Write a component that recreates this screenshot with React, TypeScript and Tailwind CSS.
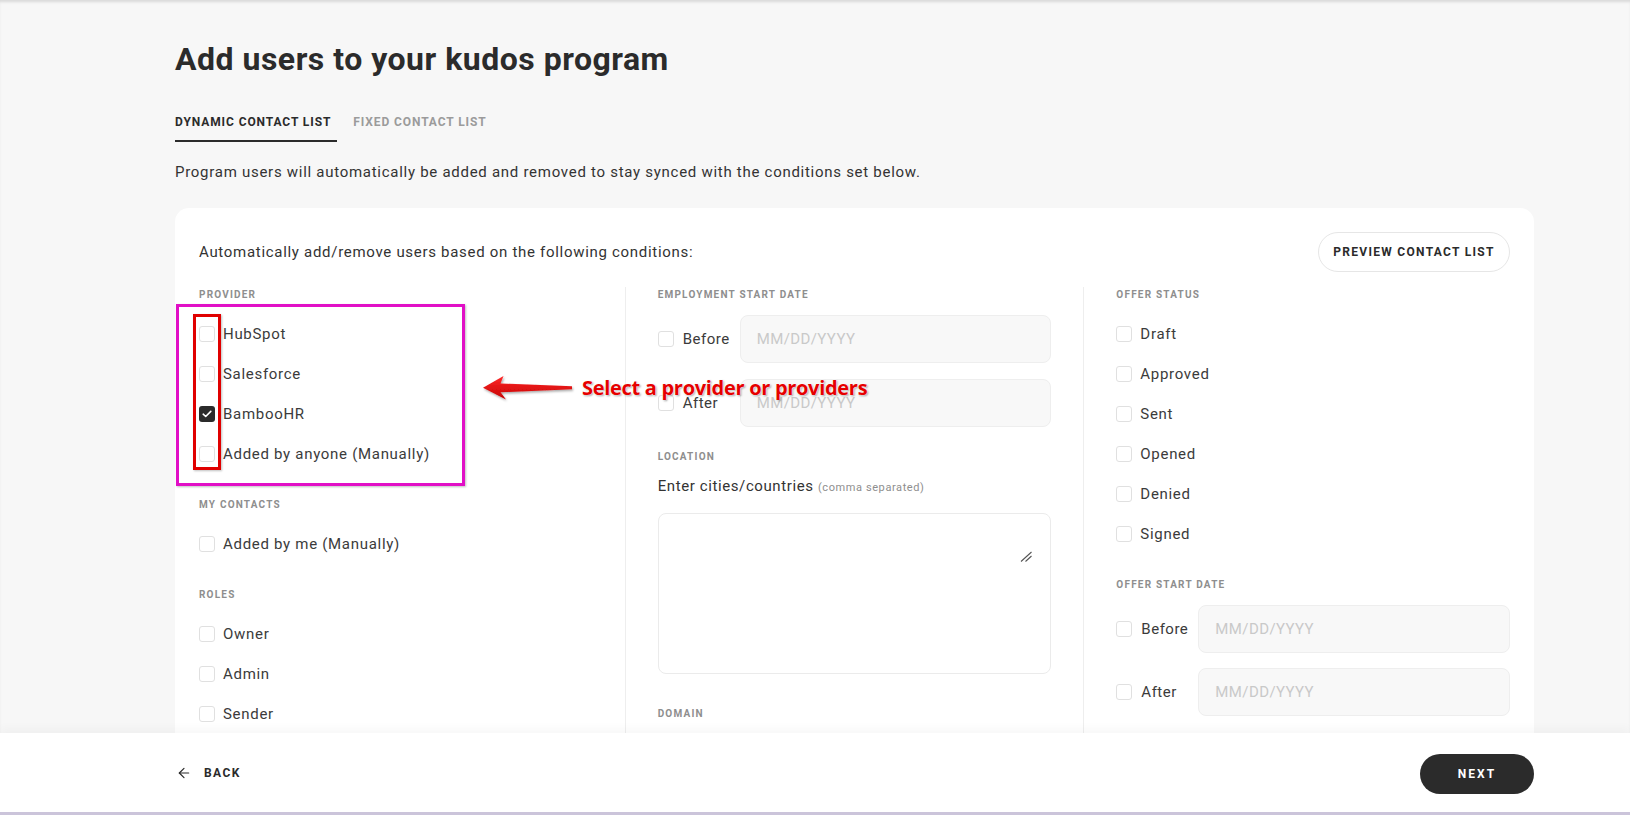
import { ArrowLeft } from "lucide-react";

type Opt = { label: string; checked?: boolean };

const PROVIDERS: Opt[] = [
  { label: "HubSpot" },
  { label: "Salesforce" },
  { label: "BambooHR", checked: true },
  { label: "Added by anyone (Manually)" },
];

const ROLES: Opt[] = [{ label: "Owner" }, { label: "Admin" }, { label: "Sender" }];

const OFFER_STATUS: Opt[] = [
  { label: "Draft" },
  { label: "Approved" },
  { label: "Sent" },
  { label: "Opened" },
  { label: "Denied" },
  { label: "Signed" },
];

function Box({ checked }: { checked?: boolean }) {
  if (checked) {
    return (
      <span className="flex h-4 w-4 shrink-0 items-center justify-center rounded-[3px] bg-[#2b2b2b]">
        <svg width="10" height="8" viewBox="0 0 10 8" fill="none">
          <path d="M1.2 4.2 3.7 6.5 8.8 1.4" stroke="#fff" strokeWidth="1.6" strokeLinecap="round" strokeLinejoin="round" />
        </svg>
      </span>
    );
  }
  return <span className="h-4 w-4 shrink-0 rounded-[3px] border border-[#e0e0e0] bg-white" />;
}

function CheckRow({ label, checked }: Opt) {
  return (
    <div className="flex h-10 items-center gap-2 text-[15px] tracking-[0.7px] text-[#3b3b3b]">
      <Box checked={checked} />
      <span>{label}</span>
    </div>
  );
}

function SectionLabel({ children }: { children: string }) {
  return <div className="h-4 text-[10px] font-bold leading-4 tracking-[1.2px] text-[#8e8e8e]">{children}</div>;
}

function DateRow({ label }: { label: string }) {
  return (
    <div className="flex h-12 items-center">
      <div className="flex w-[82px] shrink-0 items-center gap-[9px]">
        <Box />
        <span className="text-[15px] tracking-[0.5px] text-[#3b3b3b]">{label}</span>
      </div>
      <div className="flex h-12 flex-1 items-center rounded-lg border border-[#eeeeee] bg-[#f8f8f8] pl-4 text-[15px] tracking-[0.4px] text-[#c9c9c9]">
        MM/DD/YYYY
      </div>
    </div>
  );
}

export default function App() {
  return (
    <div className="relative flex h-[815px] flex-col overflow-hidden bg-[#f7f7f7] font-[Roboto,sans-serif] text-[#2b2b2b]">
      <main className="min-h-0 flex-1 overflow-hidden pl-[175px] pt-[39px] shadow-[inset_0_3px_3px_-1px_rgba(0,0,0,0.12)]">
        <div className="w-[1359px]">
          <h1 className="h-10 text-[32px] font-bold leading-10 tracking-[0.5px]">Add users to your kudos program</h1>

          <div className="mt-[35px] flex gap-4 text-[12px] font-bold leading-4 tracking-[0.9px]">
            <div className="border-b-2 border-[#2b2b2b] pb-[10px] pr-[6px]">DYNAMIC CONTACT LIST</div>
            <div className="pb-[10px] text-[#9b9b9b]">FIXED CONTACT LIST</div>
          </div>

          <p className="mt-[19px] text-[15px] leading-[22px] tracking-[0.72px] text-[#333]">
            Program users will automatically be added and removed to stay synced with the conditions set below.
          </p>

          <section className="mt-[25px] rounded-[14px] bg-white px-6 pt-6">
            <div className="flex h-10 items-center justify-between">
              <span className="text-[15px] tracking-[0.7px] text-[#333]">
                Automatically add/remove users based on the following conditions:
              </span>
              <button className="h-10 w-[192px] rounded-full border border-[#e6e6e6] bg-white text-[12px] font-bold tracking-[1.3px] text-[#2b2b2b]">
                PREVIEW CONTACT LIST
              </button>
            </div>

            <div className="mt-[15px] flex">
              <div className="flex-1 pr-8 pb-6">
                <SectionLabel>PROVIDER</SectionLabel>
                <div className="mt-[11px]">
                  {PROVIDERS.map((o) => (
                    <CheckRow key={o.label} {...o} />
                  ))}
                </div>
                <div className="mt-[23px]">
                  <SectionLabel>MY CONTACTS</SectionLabel>
                </div>
                <div className="mt-[11px]">
                  <CheckRow label="Added by me (Manually)" />
                </div>
                <div className="mt-[23px]">
                  <SectionLabel>ROLES</SectionLabel>
                </div>
                <div className="mt-[11px]">
                  {ROLES.map((o) => (
                    <CheckRow key={o.label} {...o} />
                  ))}
                </div>
              </div>

              <div className="flex-1 border-l border-[#eeeeee] px-8">
                <SectionLabel>EMPLOYMENT START DATE</SectionLabel>
                <div className="mt-3">
                  <DateRow label="Before" />
                </div>
                <div className="mt-4">
                  <DateRow label="After" />
                </div>
                <div className="mt-[22px]">
                  <SectionLabel>LOCATION</SectionLabel>
                </div>
                <div className="mt-[10px] text-[15px] leading-[22px] tracking-[0.6px] text-[#333]">
                  Enter cities/countries{" "}
                  <span className="text-[11px] tracking-[0.6px] text-[#8e8e8e]">(comma separated)</span>
                </div>
                <div className="mt-[14px] flex h-[161px] justify-end rounded-lg border border-[#ebebeb] bg-white pr-[18px] pt-[37px]">
                  <svg width="12" height="11" viewBox="0 0 12 11" fill="none">
                    <path d="M1 10.5 11.5 1M5.5 10.5 11.5 5" stroke="#555" strokeWidth="1.1" />
                  </svg>
                </div>
                <div className="mt-8">
                  <SectionLabel>DOMAIN</SectionLabel>
                </div>
                <div className="mt-3 h-12 rounded-lg border border-[#eeeeee] bg-[#f8f8f8]" />
              </div>

              <div className="flex-1 border-l border-[#eeeeee] pl-8">
                <SectionLabel>OFFER STATUS</SectionLabel>
                <div className="mt-[11px]">
                  {OFFER_STATUS.map((o) => (
                    <CheckRow key={o.label} {...o} />
                  ))}
                </div>
                <div className="mt-[23px]">
                  <SectionLabel>OFFER START DATE</SectionLabel>
                </div>
                <div className="mt-3">
                  <DateRow label="Before" />
                </div>
                <div className="mt-[15px]">
                  <DateRow label="After" />
                </div>
              </div>
            </div>
          </section>
        </div>
      </main>

      <footer className="relative z-10 flex h-[82px] shrink-0 items-center justify-between border-b-[3px] border-[#cbc4da] bg-white pl-[176px] pr-[96px] shadow-[0_-4px_10px_rgba(0,0,0,0.035)]">
        <button className="flex items-center gap-[12px] text-[12px] font-bold tracking-[1.4px] text-[#2b2b2b]">
          <ArrowLeft size={16} strokeWidth={1.8} />
          BACK
        </button>
        <button className="mt-[3px] h-10 w-[114px] rounded-full bg-[#2b2b2b] text-[12px] font-bold tracking-[2px] text-white">
          NEXT
        </button>
      </footer>

      {/* annotation overlays */}
      <div className="pointer-events-none absolute left-[176px] top-[304px] h-[182px] w-[289px] border-[3px] border-[#e10fc6] shadow-[1px_1px_2px_rgba(0,0,0,0.25)]" />
      <div className="pointer-events-none absolute left-[193px] top-[314px] h-[156px] w-[28px] border-[3px] border-[#e00000] shadow-[1px_1px_2px_rgba(0,0,0,0.25)]" />
      <svg
        className="pointer-events-none absolute left-[480px] top-[374px]"
        width="96"
        height="30"
        viewBox="0 0 96 30"
      >
        <defs>
          <linearGradient id="arrowFill" x1="0" y1="0" x2="0" y2="1">
            <stop offset="0" stopColor="#ff2a2a" />
            <stop offset="1" stopColor="#c40000" />
          </linearGradient>
          <filter id="arrowShadow" x="-10%" y="-30%" width="120%" height="160%">
            <feDropShadow dx="1" dy="1.5" stdDeviation="1" floodColor="#000" floodOpacity="0.35" />
          </filter>
        </defs>
        <path
          d="M3 13.8 L23.5 2 L20.5 9.5 L92 12.3 L92 15.3 L20.5 18.3 L26 25.5 Z"
          fill="url(#arrowFill)"
          filter="url(#arrowShadow)"
        />
      </svg>
      <div className="pointer-events-none absolute left-[582px] top-[374px] font-['Open_Sans',sans-serif] text-[20px] font-bold leading-7 tracking-[-0.3px] text-[#e60000] [text-shadow:0_0_2px_#fff,0_0_2px_#fff,1px_1px_2px_rgba(0,0,0,0.45)]">
        Select a provider or providers
      </div>
    </div>
  );
}
